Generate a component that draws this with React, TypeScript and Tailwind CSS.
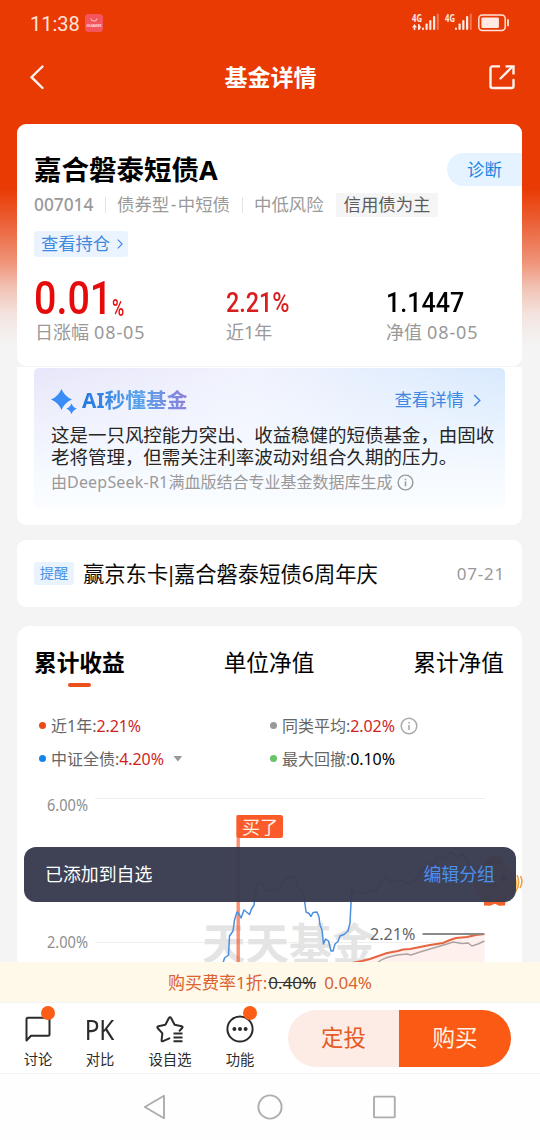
import React from 'react';

const TABS = ['累计收益', '单位净值', '累计净值'];

const BENCHMARK_LINE =
  'M223 963L224.5 958L228.5 955L229.5 936L233 931L234.5 920L237 912L239 914L241 918L244 910L246.5 912L249.5 914.5L251.5 909L254 905L255 897L257 885L259 881.5L262 883L267 891L277 890L283 883L287 877L295 877L298 888L302 890L304.5 900L306 912L309 913.5L311 916.5L313 912.5L317 912L319 917L320 925L322 930L323.5 944L325.5 939L328.5 941L331 951L333 951L335 944L338 941.5L340 936L344 934.5L348 931L350 923L351 903L352 887L354 893L361 892L367 893L370 890L376 891L380 882L386 877L391 882L397 880L403 881L410 884L418 876L424 868L430 863L434 866L437 857L444 858L451 852L457 857L463 854L468 862L473 873L480 870L485 876';

const FUND_LINE =
  'M352 963L362 961L370 959L377 956.5L387 953L398 951L403 949.5L410 949L420 947L430 945L443 943L450 940L456 938L467 937L476 935L484.5 934';

const AVERAGE_LINE =
  'M377 963L382 959.5L387 957.5L397 955L407 954L411 955L420 952L430 949L447 944L453 942L462 943.5L468 943L472 946L478 944L484.5 941';

const InfoIcon = ({ className }: { className: string }) => (
  <svg viewBox="0 0 18 18" className={className} fill="none" stroke="currentColor">
    <circle cx="9" cy="9" r="7.8" strokeWidth="1.5" />
    <path d="M9 8v5M9 5v1.6" strokeWidth="1.6" />
  </svg>
);

const Chevron = ({ className }: { className: string }) => (
  <svg viewBox="0 0 8 14" className={className} fill="none" stroke="currentColor" strokeWidth="1.6">
    <path d="M1 1l6 6-6 6" />
  </svg>
);

const Signal = ({ data }: { data?: boolean }) => (
  <svg width="28" height="20" viewBox="0 0 28 20" fill="#ffe9e2" className="overflow-visible">
    <text x="0" y="8.6" fontSize="10.5" fontWeight="700" textLength="10" lengthAdjust="spacingAndGlyphs">
      4G
    </text>
    {data && <path d="M2.5 11L5 14.5H3.3V17H1.7V14.5H0zM6 17V11H7.2L9 14.5 7.2 17z" />}
    <rect x="10" y="14.5" width="2" height="2.5" rx="1" />
    <rect x="13.5" y="10.5" width="2.2" height="6.5" rx="1" />
    <rect x="17.2" y="7" width="2.2" height="10" rx="1" />
    <rect x="21" y="3" width="2.2" height="14" rx="1" />
    <rect x="24.8" y="0.5" width="2" height="16.5" rx="1" opacity="0.35" />
  </svg>
);

function StatusBar() {
  return (
    <div className="flex h-[46px] shrink-0 items-center pl-[30px] pr-[30px]">
      <span className="w-[55px] pt-px font-[Roboto,sans-serif] text-[20px] leading-none text-[#ffe3da]">11:38</span>
      <svg width="18" height="18" viewBox="0 0 18 18">
        <rect width="18" height="18" rx="3.5" fill="#f4545c" />
        <path d="M6 4.5a3 2.6 0 0 0 6 0" fill="none" stroke="#ffc9c6" strokeWidth="1" />
        <text x="1.5" y="12.5" fontSize="4" fontWeight="700" fill="#ffd9d6" textLength="15">
          HUAWEI
        </text>
      </svg>
      <div className="ml-auto flex items-center">
        <div className="mr-[5px] flex">
          <Signal data />
        </div>
        <Signal />
        <svg width="32" height="18" viewBox="0 0 32 18" className="ml-[5px]">
          <rect x="0.8" y="1" width="26.4" height="15.5" rx="3.5" fill="none" stroke="#ffe3da" strokeWidth="1.5" />
          <rect x="3.4" y="3.6" width="17.5" height="10.4" rx="1.2" fill="#ffe9e2" />
          <rect x="29" y="5" width="2" height="7.5" rx="1" fill="#ffd5c8" />
        </svg>
      </div>
    </div>
  );
}

function Header() {
  return (
    <div className="flex h-[62px] shrink-0 items-center justify-between pl-[29px] pr-[24px] text-white">
      <svg width="24" height="26" viewBox="0 0 24 26" fill="none" stroke="#fff3ee" strokeWidth="2.4" strokeLinecap="round">
        <path d="M13.5 2.5L2.5 13.2 13.5 24" />
      </svg>
      <h1 className="text-[23px] font-bold leading-none">基金详情</h1>
      <svg width="28" height="28" viewBox="0 0 28 28" fill="none" stroke="#fff3ee" strokeWidth="2.4">
        <path d="M11 3.4H4.5a2 2 0 0 0-2 2V23a2 2 0 0 0 2 2h19a2 2 0 0 0 2-2v-6" strokeLinecap="round" />
        <path d="M12.5 15.5L24 4" strokeLinecap="round" />
        <path d="M17.5 3.4h8v8" />
      </svg>
    </div>
  );
}

const StatLabel = ({ text, date }: { text: string; date?: string }) => (
  <p className="h-[22px] whitespace-nowrap leading-[22px]">
    {text}
    {date && <span className="ml-[5px] tracking-[0.9px]">{date}</span>}
  </p>
);

function FundCard() {
  return (
    <section className="h-[242px] shrink-0 rounded-[9px] bg-white pl-[18px] pt-[29px]">
      <div className="flex h-[33px] items-center justify-between">
        <h2 className="-ml-px text-[27.5px] font-bold leading-none text-black">
          嘉合磐泰短债<span className="text-[27px]">A</span>
        </h2>
        <span className="flex h-[33px] w-[75px] items-center rounded-l-full bg-[#e4f3ff] pl-5 text-[17.4px] leading-none text-[#1a86e2]">
          诊断
        </span>
      </div>
      <div className="mt-[7px] flex h-6 items-center whitespace-nowrap text-[17.4px] leading-none text-[#9a9a9a]">
        <span className="-ml-px w-[71px] text-[17.3px] font-medium">007014</span>
        <i className="h-4 w-px bg-[#e3e3e3]" />
        <span className="w-[136px] pl-[11px]">
          债券型<span className="mx-[1.5px]">-</span>中短债
        </span>
        <i className="h-4 w-px bg-[#e3e3e3]" />
        <span className="w-[93px] pl-[11px]">中低风险</span>
        <span className="flex h-6 w-[102px] items-center justify-center bg-[#f5f5f5] text-[#5c5c5c]">信用债为主</span>
      </div>
      <div className="-ml-px mt-[14px] flex h-[26px] w-[94px] items-center rounded-[3px] bg-[#ebf4fe] pl-[7px] text-[17.3px] leading-none text-[#4089de]">
        查看持仓
        <Chevron className="ml-[7px] h-[10px] w-[6px]" />
      </div>
      <div className="mt-[18px] flex text-[18px] text-[#999]">
        <div className="w-[191px]">
          <div className="flex h-[46px] items-end font-[Roboto,sans-serif] text-[#e60b0b]">
            <span className="-ml-px w-[78px] origin-left scale-x-[0.84] text-[47px] font-medium leading-[46px]">0.01</span>
            <span className="origin-left scale-x-[0.72] text-[23px] font-medium leading-[24px]">%</span>
          </div>
          <StatLabel text="日涨幅" date="08-05" />
        </div>
        <div className="w-[160px]">
          <div className="flex h-[46px] items-end font-[Roboto,sans-serif] text-[#d81e1e]">
            <span className="origin-left scale-x-[0.82] text-[28.5px] font-medium leading-[36px]">2.21%</span>
          </div>
          <StatLabel text="近1年" />
        </div>
        <div>
          <div className="flex h-[46px] items-end font-[Roboto,sans-serif] text-black">
            <span className="origin-left scale-x-[0.88] text-[28.5px] font-medium leading-[36px]">1.1447</span>
          </div>
          <StatLabel text="净值" date="08-05" />
        </div>
      </div>
    </section>
  );
}

function AiSummary() {
  return (
    <section className="mt-px h-[158px] shrink-0 rounded-b-[9px] bg-white px-[17px] pt-px">
      <div className="h-[140px] rounded-[5px] bg-[linear-gradient(to_bottom,transparent_0%,#f5faff_75%,#fbfdff_100%),linear-gradient(100deg,#e8e6fa_0%,#f1f3fd_45%,#d6e8fe_100%)] pl-[17px] pt-[20px]">
        <div className="flex h-6 items-center">
          <svg width="27" height="26" viewBox="0 0 27 26" className="mt-1" fill="#3a8df5">
            <path d="M10.5 0Q13.6 7.4 21 10.5Q13.6 13.6 10.5 21Q7.4 13.6 0 10.5Q7.4 7.4 10.5 0z" />
            <path d="M20.5 14.5Q21.9 18.4 26 19.8Q21.9 21.2 20.5 25.2Q19.1 21.2 15.3 19.8Q19.1 18.4 20.5 14.5z" />
          </svg>
          <h3 className="ml-[4px] bg-[linear-gradient(90deg,#2478de,#57a2ec_55%,#8e7fd8)] bg-clip-text text-[20.8px] font-bold leading-6 text-transparent">
            AI秒懂基金
          </h3>
          <span className="ml-auto flex items-center pr-[24px] text-[17.4px] leading-none text-[#4089e2]">
            查看详情
            <Chevron className="ml-[9px] h-[13px] w-[8px]" />
          </span>
        </div>
        <p className="mt-[12px] whitespace-nowrap text-[18.48px] leading-[22px] text-[#262626]">
          这是一只风控能力突出、收益稳健的短债基金，由固收
          <br />
          老将管理，但需关注利率波动对组合久期的压力。
        </p>
        <div className="mt-[4px] flex h-[20px] items-center whitespace-nowrap text-[16px] leading-none text-[#999]">
          <span>
            由<span className="tracking-[0.2px]">DeepSeek-R1</span>满血版结合专业基金数据库生成
          </span>
          <InfoIcon className="ml-[5px] h-[17px] w-[17px]" />
        </div>
      </div>
    </section>
  );
}

function Notice() {
  return (
    <section className="mt-[15px] flex h-[67px] shrink-0 items-center rounded-[9px] bg-white pl-[17px] pr-[17px]">
      <span className="flex h-[23px] w-10 items-center justify-center rounded-[3px] bg-[#e8f3fe] text-[14.2px] leading-none text-[#4c93e4]">
        提醒
      </span>
      <span className="ml-[9px] whitespace-nowrap text-[21.3px] leading-none text-[#0a0a0a]">
        赢京东卡<span className="mx-[-3px]">|</span>嘉合磐泰短债6周年庆
      </span>
      <span className="ml-auto text-[17px] leading-none tracking-[0.8px] text-[#999]">07-21</span>
    </section>
  );
}

interface LegendProps {
  dot: string;
  label: string;
  value: string;
  valueClass?: string;
  children?: React.ReactNode;
}

const Legend = ({ dot, label, value, valueClass = 'text-[#cf1f1f]', children }: LegendProps) => (
  <div className="flex h-[33px] items-center whitespace-nowrap text-[16px] leading-none text-[#666]">
    <i className={`mr-[5px] h-[7px] w-[7px] rounded-full ${dot}`} />
    {label}:<span className={`tracking-[-0.1px] ${valueClass}`}>{value}</span>
    {children}
  </div>
);

function YieldChart() {
  return (
    <svg width="505" height="173" viewBox="17 790 505 173" className="block shrink-0">
      <g stroke="#efefef" strokeWidth="1">
        <path d="M95 798.5H485M95 942.5H485" />
      </g>
      <text x="202" y="960" fontSize="43.5" fontWeight="700" fill="#e4e4e4">
        天天基金
      </text>
      <g fontSize="15.8" fill="#8e8e8e">
        <text x="47" y="810.5" textLength="41" lengthAdjust="spacingAndGlyphs">
          6.00%
        </text>
        <text x="47" y="947.5" textLength="41" lengthAdjust="spacingAndGlyphs">
          2.00%
        </text>
      </g>
      <path d={`${FUND_LINE}V963Z`} fill="#fdf0ed" />
      <rect x="236.5" y="815" width="3.4" height="150" fill="#f8532a" opacity="0.65" />
      <path d={BENCHMARK_LINE} fill="none" stroke="#4b8fdd" strokeWidth="1.5" strokeLinejoin="round" />
      <path d={AVERAGE_LINE} fill="none" stroke="#aaa3a1" strokeWidth="1.4" />
      <path d={FUND_LINE} fill="none" stroke="#e56540" strokeWidth="2" />
      <rect x="236.5" y="815" width="46.5" height="23" rx="2.5" fill="#fb5b2b" />
      <text x="242" y="833.5" fontSize="18" fill="#fff0e6">
        买了
      </text>
      <text x="370" y="940" fontSize="16.8" fill="#666" textLength="45.5" lengthAdjust="spacingAndGlyphs">
        2.21%
      </text>
      <path d="M422.5 934H484" stroke="#8a8a8a" strokeWidth="1.8" />
    </svg>
  );
}

// floating chick that peeks out from under the toast
const Mascot = () => (
  <svg width="54" height="54" viewBox="0 0 54 54">
    <path d="M43 19q7 7 2 20l-5 4z" fill="#f6c152" />
    <path d="M47 21q4 8-1.5 17M50.5 22q3 6-.5 12" stroke="#f0a04a" strokeWidth="1.6" fill="none" />
    <circle cx="24" cy="28" r="21" fill="#f7c16c" />
    <path d="M16 10q0-8 9-8 8 0 8 8z" fill="#ef5a25" />
    <path d="M18 31q6-5 12 0-6 6-12 0z" fill="#ef5a25" />
    <circle cx="12" cy="24" r="3" fill="#333" />
    <circle cx="34" cy="24" r="3" fill="#333" />
    <path d="M14 43l11 3 11-3-1 8.5-6 .2-4-2-5 2-6-.2z" fill="#f2602c" />
  </svg>
);

function ChartCard() {
  return (
    <section className="mt-[19px] flex min-h-0 flex-1 flex-col overflow-hidden rounded-t-[13px] bg-white">
      <div className="flex justify-between pl-[17px] pr-[18px] pt-[24px] text-[22.7px] leading-[26px] text-black">
        {TABS.map((tab, i) => (
          <div key={tab} className="flex flex-col items-center">
            <span className={i === 0 ? 'font-bold' : ''}>{tab}</span>
            {i === 0 && <i className="mt-[7px] h-1 w-[23px] rounded-full bg-[#ea501d]" />}
          </div>
        ))}
      </div>
      <div className="mt-[22px] grid grid-cols-[231px_1fr] pl-[22px]">
        <Legend dot="bg-[#ea4a15]" label="近1年" value="2.21%" />
        <Legend dot="bg-[#999999]" label="同类平均" value="2.02%">
          <InfoIcon className="ml-[5px] h-[18px] w-[18px] text-[#aaa]" />
        </Legend>
        <Legend dot="bg-[#1684e4]" label="中证全债" value="4.20%">
          <svg width="10" height="6" viewBox="0 0 10 6" className="ml-[9px]">
            <path d="M0.5 0h8.6L5 5.6z" fill="#999" />
          </svg>
        </Legend>
        <Legend dot="bg-[#66c466]" label="最大回撤" value="0.10%" valueClass="text-black" />
      </div>
      <div className="mt-[15px]">
        <YieldChart />
      </div>
    </section>
  );
}

const Badge = () => <i className="absolute -right-[3px] -top-[8px] h-[14px] w-[14px] rounded-full bg-[#fb5c16]" />;

interface ActionProps {
  label: string;
  width?: string;
  children: React.ReactNode;
}

const Action = ({ label, width = 'w-[62px]', children }: ActionProps) => (
  <button className={`flex flex-col items-center pt-[11px] ${width}`}>
    <span className="relative flex h-[30px] w-[28px] items-center justify-center">{children}</span>
    <span className="mt-[6px] whitespace-nowrap text-[14.3px] leading-[19px] text-[#2b2b2b]">{label}</span>
  </button>
);

function ActionBar() {
  return (
    <div className="flex h-[72px] shrink-0 border-y border-[#f2f2f2] bg-white pl-[7px]">
      <Action label="讨论">
        <svg width="28" height="28" viewBox="0 0 28 28" fill="none" stroke="#2b2b2b" strokeWidth="2" strokeLinejoin="round" strokeLinecap="round">
          <path d="M2.5 25.5V4.3a1.5 1.5 0 0 1 1.5-1.5h20a1.5 1.5 0 0 1 1.5 1.5v14.9a1.5 1.5 0 0 1-1.5 1.5H7z" />
        </svg>
        <Badge />
      </Action>
      <Action label="对比">
        <span className="origin-center scale-x-[0.9] text-[27px] leading-none text-[#2b2b2b]">PK</span>
      </Action>
      <Action label="设自选" width="w-[78px]">
        <svg width="28" height="28" viewBox="0 0 28 28" fill="none" stroke="#2b2b2b" strokeWidth="2" strokeLinejoin="round" strokeLinecap="round" className="shrink-0">
          <path d="M13.4 23.4L7 26.2Q5.4 26.7 5.6 25L6.4 18.4 1.6 13Q.8 11.6 2.4 11.2L9.4 9.8 12.9 3Q14 1.4 15.1 3L18.6 9.8 25.6 11.2Q27.2 11.6 26.2 13L23.6 15.8" />
          <path d="M17.5 18.6H26.5M17.5 22.4H26.5M17.5 26.2H26.5" strokeLinecap="butt" />
        </svg>
      </Action>
      <Action label="功能">
        <svg width="28" height="28" viewBox="0 0 28 28">
          <circle cx="14" cy="14" r="12.6" fill="none" stroke="#2b2b2b" strokeWidth="2" />
          <g fill="#2b2b2b">
            <circle cx="8.4" cy="14" r="2" />
            <circle cx="14" cy="14" r="2" />
            <circle cx="19.6" cy="14" r="2" />
          </g>
        </svg>
        <Badge />
      </Action>
      <div className="ml-[17px] mt-[7px] flex h-[57px] w-[223px] overflow-hidden rounded-full text-[22.5px] leading-none">
        <button className="w-[111px] bg-[#fdece6] text-[#e65a25]">定投</button>
        <button className="flex-1 bg-[#fb5a14] text-[#fff2e2]">购买</button>
      </div>
    </div>
  );
}

function SystemNav() {
  return (
    <div className="flex h-[66px] shrink-0 items-center justify-between bg-[#fefefe] pl-[143px] pr-[143px]">
      <svg width="23" height="26" viewBox="0 0 23 26" fill="none" stroke="#adadad" strokeWidth="1.9" strokeLinejoin="round">
        <path d="M21 1.8V24.2L1.8 13z" />
      </svg>
      <svg width="26" height="26" viewBox="0 0 26 26" fill="none" stroke="#adadad" strokeWidth="1.9">
        <circle cx="13" cy="13" r="11.6" />
      </svg>
      <svg width="24" height="24" viewBox="0 0 24 24" fill="none" stroke="#adadad" strokeWidth="1.9">
        <rect x="1" y="1.6" width="20.8" height="20.8" rx="1" />
      </svg>
    </div>
  );
}

export default function App() {
  return (
    <div className="relative flex h-[1140px] w-[540px] flex-col overflow-hidden bg-[#f4f4f4] bg-[linear-gradient(to_bottom,#e93a03_0px,#e93a03_188px,#eb6036_222px,#ef9378_262px,#f2c3b5_288px,#f3e4df_315px,#f4f4f4_345px)] font-['Noto_Sans','Noto_Sans_CJK_SC',sans-serif]">
      <StatusBar />
      <Header />
      <main className="flex min-h-0 flex-1 flex-col pl-[17px] pr-[18px] pt-4">
        <FundCard />
        <AiSummary />
        <Notice />
        <ChartCard />
      </main>
      <div className="flex h-[40px] shrink-0 items-center justify-center bg-[#fff9ea] text-[17px] leading-none text-[#dc6230]">
        购买费率1折:<span className="ml-px text-[#333] line-through">0.40%</span>
        <span className="ml-2">0.04%</span>
      </div>
      <ActionBar />
      <SystemNav />

      <div className="absolute left-[470px] top-[854px]">
        <Mascot />
      </div>
      <div className="absolute left-6 top-[847px] flex h-[55px] w-[492px] items-center justify-between rounded-xl bg-[#393b50]/97 pl-[21px] pr-[21px] pt-px text-[17.9px] leading-none text-white">
        <span>已添加到自选</span>
        <span className="text-[#4a90ec]">编辑分组</span>
      </div>
    </div>
  );
}
